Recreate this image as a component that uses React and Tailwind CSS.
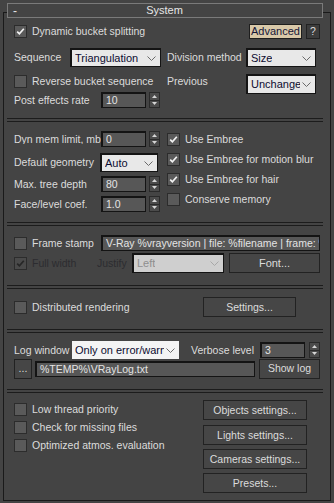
import React from "react";

const font = { fontFamily: '"Liberation Sans", Arial, sans-serif' };

function Check({ checked, disabled }) {
  return (
    <span
      className={`w-[13px] h-[13px] shrink-0 flex items-center justify-center border border-[#2c2c2c] ${
        disabled ? "bg-[#4a4a4a]" : "bg-[#5a5a5a]"
      }`}
    >
      {checked && (
        <svg width="9" height="9" viewBox="0 0 9 9">
          <path
            d="M1.2 4.6 L3.4 6.8 L7.8 1.8"
            fill="none"
            stroke={disabled ? "#262626" : "#f2f2f2"}
            strokeWidth="1.7"
          />
        </svg>
      )}
    </span>
  );
}

function CheckRow({ label, checked, disabled, className = "" }) {
  return (
    <div className={`flex items-center gap-[5px] whitespace-nowrap ${className}`}>
      <Check checked={checked} disabled={disabled} />
      <span className={disabled ? "text-[#2c2c30]" : "text-[#dcdcdc]"}>{label}</span>
    </div>
  );
}

function Select({ value, w, h = "h-[19px]", disabled }) {
  return (
    <div
      className={`${w} ${h} shrink-0 flex items-center justify-between overflow-hidden whitespace-nowrap border-t-2 border-l-2 border-r border-b border-[#141414] pl-[3px] pr-[4px] ${
        disabled ? "bg-[#cfcfcf] text-[#8e8e8e] border-[#3a3a3a]" : "bg-[#e8e8e8] text-[#0c0c30]"
      }`}
    >
      <span className="overflow-hidden text-[11px]">{value}</span>
      <svg width="9" height="5" viewBox="0 0 9 5" className="shrink-0 ml-[2px]">
        <path d="M0.5 0.5 L4.5 4.5 L8.5 0.5" fill="none" stroke={disabled ? "#a8a8a8" : "#6a6a6a"} strokeWidth="1" />
      </svg>
    </div>
  );
}

function Field({ value, w, h = "h-[16px]", className = "" }) {
  return (
    <div
      className={`${w} ${h} shrink-0 flex items-center overflow-hidden whitespace-nowrap bg-[#575757] border-t-2 border-l-2 border-r border-b border-[#141414] pl-[3px] text-[#e4e4e4] ${className}`}
    >
      {value}
    </div>
  );
}

function Spin({ className = "" }) {
  return (
    <div className={`w-[11px] h-[16px] shrink-0 flex flex-col border border-[#2a2a2a] bg-[#4b4b4b] ${className}`}>
      <div className="flex-1 flex items-center justify-center border-b border-[#2a2a2a]">
        <svg width="5" height="3" viewBox="0 0 5 3">
          <path d="M0 3 L2.5 0 L5 3 Z" fill="#d6d6d6" />
        </svg>
      </div>
      <div className="flex-1 flex items-center justify-center">
        <svg width="5" height="3" viewBox="0 0 5 3">
          <path d="M0 0 L2.5 3 L5 0 Z" fill="#d6d6d6" />
        </svg>
      </div>
    </div>
  );
}

function Btn({ children, className = "" }) {
  return (
    <div
      className={`h-[20px] shrink-0 flex items-center justify-center whitespace-nowrap bg-[#464646] border border-[#222] text-[#dcdcdc] ${className}`}
    >
      {children}
    </div>
  );
}

function Sep({ className = "" }) {
  return <div className={`ml-[3px] mr-[7px] h-[4px] border-y border-[#1c1c1c] ${className}`} />;
}

export default function App() {
  return (
    <div className="w-[334px] h-[503px] bg-[#444444] pt-[3px] overflow-hidden text-[10.5px] leading-none text-[#dcdcdc]" style={font}>
      {/* rollout title */}
      <div className="relative z-10 ml-[7px] w-[316px] h-[15px] mb-[-6px] border border-[#7a7a7a] bg-[#444444] flex items-center">
        <span className="ml-[5px] text-[#e6e6e6] text-[12px]">-</span>
        <span className="flex-1 text-center text-[#e6e6e6] text-[11px] pr-[10px]">System</span>
      </div>

      <div className="ml-[3px] w-[328px] h-[489px] border border-[#1a1a1a]">
        {/* bucket section */}
        <div className="pt-[11px] pl-[10px] pr-[10px]">
          <div className="flex items-center h-[15px]">
            <CheckRow label="Dynamic bucket splitting" checked />
            <div className="ml-auto flex gap-[4px]">
              <div className="h-[15px] w-[53px] flex items-center justify-center bg-[#d9c9a9] border border-[#1e1e1e] text-[#161638] text-[11px]">
                Advanced
              </div>
              <div className="h-[15px] w-[14px] flex items-center justify-center bg-[#3c3c3c] border border-[#222] text-[#dcdcdc]">
                ?
              </div>
            </div>
          </div>

          <div className="flex items-center h-[19px] mt-[9px]">
            <span className="w-[56px]">Sequence</span>
            <Select value="Triangulation" w="w-[91px]" />
            <span className="ml-[6px] w-[79px] whitespace-nowrap">Division method</span>
            <Select value="Size" w="w-[70px]" />
          </div>

          <div className="flex items-start h-[18px] mt-[7px]">
            <CheckRow label="Reverse bucket sequence" className="w-[153px] mt-[1px]" />
            <span className="w-[79px] mt-[2px]">Previous</span>
            <Select value="Unchange" w="w-[70px]" h="h-[20px]" />
          </div>

          <div className="flex items-center h-[16px]">
            <span className="w-[87px] whitespace-nowrap">Post effects rate</span>
            <Field value="10" w="w-[45px]" />
            <Spin className="ml-[3px]" />
          </div>
        </div>

        <Sep className="mt-[10px]" />

        {/* geometry section */}
        <div className="pt-[7px] pl-[10px] pr-[10px] flex">
          <div className="w-[153px] pt-[2px] flex flex-col">
            <div className="flex items-center h-[16px]">
              <span className="w-[87px] overflow-hidden whitespace-nowrap">Dyn mem limit, mb</span>
              <Field value="0" w="w-[45px]" />
              <Spin className="ml-[3px]" />
            </div>
            <div className="flex items-center h-[19px] mt-[6px]">
              <span className="w-[86px] whitespace-nowrap">Default geometry</span>
              <Select value="Auto" w="w-[58px]" />
            </div>
            <div className="flex items-center h-[16px] mt-[4px]">
              <span className="w-[87px] whitespace-nowrap">Max. tree depth</span>
              <Field value="80" w="w-[45px]" />
              <Spin className="ml-[3px]" />
            </div>
            <div className="flex items-center h-[16px] mt-[4px]">
              <span className="w-[87px] whitespace-nowrap">Face/level coef.</span>
              <Field value="1.0" w="w-[45px]" />
              <Spin className="ml-[3px]" />
            </div>
          </div>
          <div className="flex flex-col">
            <CheckRow label="Use Embree" checked className="h-[20px]" />
            <CheckRow label="Use Embree for motion blur" checked className="h-[20px]" />
            <CheckRow label="Use Embree for hair" checked className="h-[20px]" />
            <CheckRow label="Conserve memory" className="h-[20px]" />
          </div>
        </div>

        <Sep className="mt-[10px]" />

        {/* frame stamp */}
        <div className="pt-[9px] pl-[10px] pr-[10px]">
          <div className="flex items-center h-[16px]">
            <CheckRow label="Frame stamp" className="w-[87px]" />
            <div className="flex-1 min-w-0">
              <Field
                value="V-Ray %vrayversion | file: %filename | frame: %frame | primitives: %primitives"
                w="w-full"
                className="bg-[#4e4e4e] text-[#d8d8d8]"
              />
            </div>
          </div>
          <div className="flex items-center h-[20px] mt-[2px]">
            <CheckRow label="Full width" checked disabled className="w-[83px]" />
            <span className="w-[35px] text-[#2c2c30]">Justify</span>
            <Select value="Left" w="w-[92px]" h="h-[20px]" disabled />
            <Btn className="flex-1 ml-[5px] text-[#2e2e2e] text-[11px]">Font...</Btn>
          </div>
        </div>

        <Sep className="mt-[12px]" />

        {/* distributed */}
        <div className="pt-[8px] pl-[10px] pr-[10px]">
          <div className="flex items-center h-[20px]">
            <CheckRow label="Distributed rendering" className="w-[189px]" />
            <Btn className="w-[93px]">Settings...</Btn>
          </div>
        </div>

        <Sep className="mt-[12px]" />

        {/* log */}
        <div className="pt-[8px] pl-[10px] pr-[10px]">
          <div className="flex items-center h-[18px]">
            <span className="w-[58px] whitespace-nowrap">Log window</span>
            <div className="w-[107px] h-[18px] flex items-center justify-between overflow-hidden whitespace-nowrap bg-[#f4f4f4] text-[#0c0c30] text-[11px] pl-[3px] pr-[4px]">
              <span className="overflow-hidden">Only on error/warn</span>
              <svg width="9" height="5" viewBox="0 0 9 5" className="shrink-0 ml-[2px]">
                <path d="M0.5 0.5 L4.5 4.5 L8.5 0.5" fill="none" stroke="#6a6a6a" strokeWidth="1" />
              </svg>
            </div>
            <span className="ml-[12px] w-[69px] whitespace-nowrap">Verbose level</span>
            <Field value="3" w="w-[45px]" />
            <Spin className="ml-[4px]" />
          </div>
          <div className="flex items-center h-[17px] mt-[1px]">
            <Btn className="w-[18px] h-[16px]">...</Btn>
            <Field value="%TEMP%\VRayLog.txt" w="w-[220px] ml-[3px]" className="bg-[#4e4e4e]" />
            <Btn className="flex-1 ml-[4px] h-[17px]">Show log</Btn>
          </div>
        </div>

        <Sep className="mt-[12px]" />

        {/* misc */}
        <div className="pt-[7px] pl-[10px] pr-[10px] flex">
          <div className="w-[189px] flex flex-col">
            <CheckRow label="Low thread priority" className="h-[18px]" />
            <CheckRow label="Check for missing files" className="h-[18px]" />
            <CheckRow label="Optimized atmos. evaluation" className="h-[18px]" />
          </div>
          <div className="w-[104px] flex flex-col">
            <Btn>Objects settings...</Btn>
            <Btn className="mt-[5px]">Lights settings...</Btn>
            <Btn className="mt-[4px]">Cameras settings...</Btn>
            <Btn className="mt-[4px]">Presets...</Btn>
          </div>
        </div>
      </div>
    </div>
  );
}
